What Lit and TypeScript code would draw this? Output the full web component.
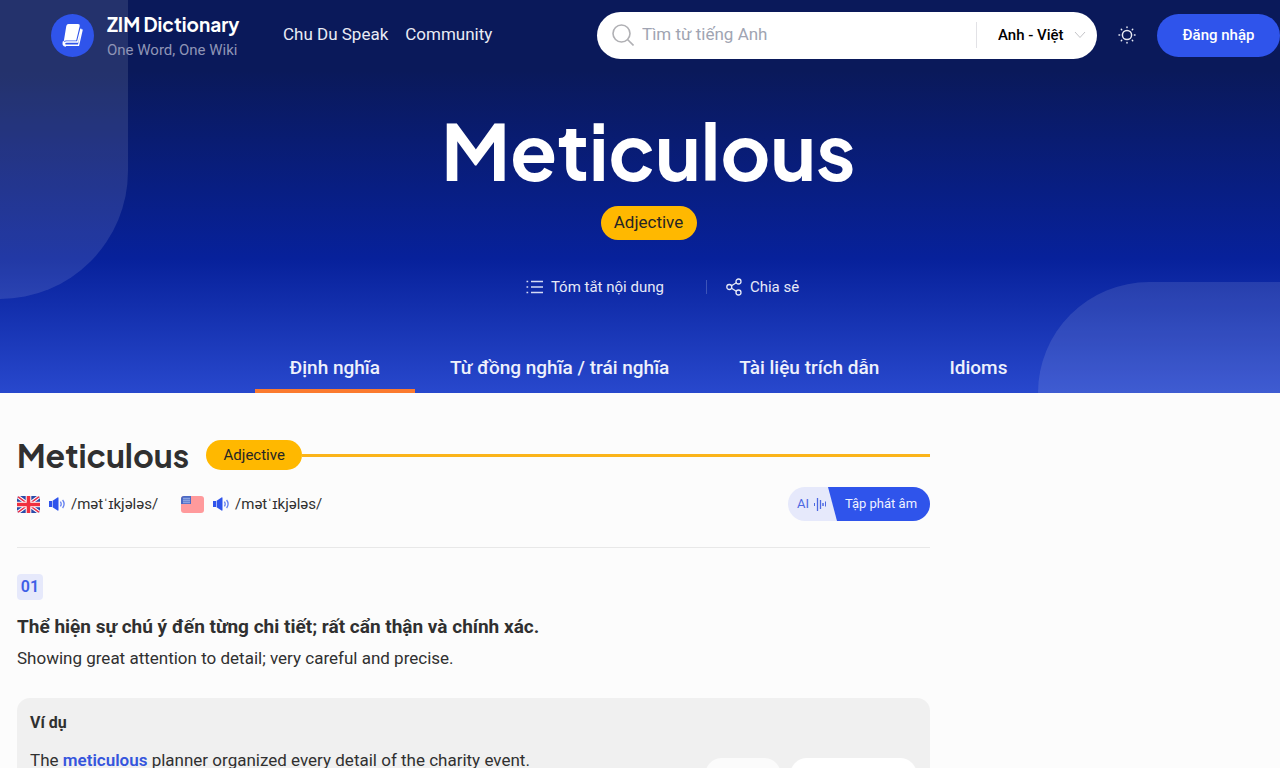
import { LitElement, html, css, svg } from "lit";
import { customElement, state } from "lit/decorators.js";

const speaker = svg`<svg class="speaker" viewBox="0 0 16 14" width="16" height="14" aria-hidden="true">
  <path d="M0 4h3v6H0z" fill="#2f54eb"/><path d="M3.6 3.8 8.5 .4Q9.5 0 9.5 1v12q0 1-1 .6L3.6 10.2z" fill="#2f54eb"/>
  <path d="M11.4 4.6q1.6 2.4 0 4.8M13.6 3q3 4 0 8" fill="none" stroke="#2f54eb" stroke-width="1.300" opacity=".75"/>
</svg>`;

const flagUk = svg`<svg viewBox="0 0 23 17" width="23" height="17" role="img" aria-label="UK">
  <clipPath id="uk"><rect width="23" height="17" rx="3"/></clipPath>
  <g clip-path="url(#uk)"><rect width="23" height="17" fill="#2b4aa8"/>
  <path d="M0 0 23 17M23 0 0 17" stroke="#fff" stroke-width="3.6"/><path d="M0 0 23 17M23 0 0 17" stroke="#e8304a" stroke-width="1.5"/>
  <path d="M11.5 0v17M0 8.5h23" stroke="#fff" stroke-width="5.6"/><path d="M11.5 0v17M0 8.5h23" stroke="#f0303f" stroke-width="3.6"/></g>
</svg>`;

const flagUs = svg`<svg viewBox="0 0 23 17" width="23" height="17" role="img" aria-label="US">
  <clipPath id="us"><rect width="23" height="17" rx="3"/></clipPath>
  <g clip-path="url(#us)"><rect width="23" height="17" fill="#ff9a9c"/><rect width="10" height="8" fill="#4a69c4"/>
  <path d="M2 2.500h7M2 4.500h7M2 6.500h7" stroke="#8ba2e0" stroke-width="1.400"/></g>
</svg>`;

@customElement("app-root")
export class AppRoot extends LitElement {
  @state() private active = 0;

  private tabs = ["Định nghĩa", "Từ đồng nghĩa / trái nghĩa", "Tài liệu trích dẫn", "Idioms"];

  static styles = css`
    :host { display: block; height: 100vh; overflow: hidden; background: #fcfcfc; color: #303030; font: 17px/22px Roboto, sans-serif; }
    * { box-sizing: border-box; }
    button, input, select { font: inherit; color: inherit; border: 0; background: none; padding: 0; margin: 0; }
    button, select { cursor: pointer; }
    a { color: inherit; text-decoration: none; }
    h1, h2, h3, p { margin: 0; }
    svg { display: block; flex: none; }
    .hero { position: relative; overflow: hidden; color: #fff; background: linear-gradient(#0a195a 0, #0a195a 18%, #07219b 66%, #2848cd 100%); }
    .shape { position: absolute; background: rgba(255, 255, 255, 0.11); }
    .shape-left { left: 0; top: 0; width: 10%; height: 299px; border-bottom-right-radius: 128px; }
    .shape-right { right: 0; bottom: 0; width: 242px; height: 111px; border-top-left-radius: 111px; }
    .bar { position: relative; display: flex; align-items: center; height: 70px; padding-left: 51px; }
    .brand { display: flex; align-items: center; gap: 13px; width: 232px; }
    .name { display: block; padding-top: 3px; font: 700 19px/26px "Plus Jakarta Sans", Inter, sans-serif; }
    .tag { display: block; font-size: 15px; line-height: 26px; color: #8f95b6; }
    .nav { display: flex; gap: 17px; flex: 1; padding-bottom: 2px; }
    .nav a { color: #e9ebf4; }
    .search { display: flex; align-items: center; width: 500px; height: 47px; border-radius: 24px; background: #fff; padding: 0 11px 0 15px; }
    .search input { flex: 1; min-width: 0; outline: 0; padding: 0 0 2px 8px; color: #222; }
    .search input::placeholder { color: #a0a4b2; opacity: 1; }
    .lang { position: relative; display: flex; align-items: center; border-left: 1px solid #e2e2e6; height: 26px; padding-left: 21px; }
    .lang select { appearance: none; width: 76px; color: #000; font-size: 15px; font-weight: 500; outline: 0; }
    .theme { display: grid; place-items: center; width: 60px; height: 42px; }
    .login { width: 123px; height: 43px; border-radius: 22px; background: #2f54eb; font-size: 15px; font-weight: 500; }
    .intro { position: relative; display: flex; flex-direction: column; align-items: center; padding: 30px 0 0 17px; }
    .title { font: 700 77px/100px "Plus Jakarta Sans", Inter, sans-serif; }
    .pill { display: flex; align-items: center; justify-content: center; background: #ffb800; color: #252525; border-radius: 17px; width: 96px; height: 34px; padding-bottom: 2px; }
    .intro .pill { margin-top: 6px; }
    .actions { display: flex; align-items: center; margin-top: 34px; padding-left: 28px; font-size: 15px; }
    .actions button { display: flex; align-items: center; gap: 8px; line-height: 26px; color: #e6e9f7; }
    .rule { width: 1px; height: 14px; background: #3d54b8; margin: 0 19px 0 42px; }
    .tabs { display: flex; margin-top: 43px; }
    .tabs button { height: 50px; padding: 4px 35px 0; font-size: 19px; font-weight: 500; color: #eef1fc; border-bottom: 4px solid transparent; }
    .tabs .on { border-color: #fb7a2e; }
    .content { width: 930px; max-width: 100%; padding: 41px 0 0 17px; }
    .head { display: flex; align-items: center; }
    .word { font: 700 32px/42px "Plus Jakarta Sans", Inter, sans-serif; margin-right: 17px; }
    .head .pill { height: 30px; font-size: 15px; padding-bottom: 0; }
    .line { flex: 1; height: 3px; background: #fbb41a; }
    .sounds { display: flex; align-items: center; margin-top: 11px; padding-bottom: 26px; border-bottom: 1px solid #e8e8e8; }
    .sound { display: flex; align-items: center; gap: 6px; margin-right: 23px; font-size: 15px; }
    .sound .speaker { margin-left: 3px; }
    .ai { position: relative; display: flex; margin-left: auto; width: 142px; height: 34px; border-radius: 17px; overflow: hidden; background: #e6e9fb; color: #4d68e2; font-size: 13px; line-height: 34px; }
    .ai-left { display: flex; align-items: center; gap: 4px; width: 40px; padding-left: 9px; }
    .ai-right { flex: 1; background: #2f54eb; color: #eef1ff; clip-path: polygon(0 0, 100% 0, 100% 100%, 9px 100%); padding-left: 4px; }
    .num { display: grid; place-items: center; width: 26px; height: 26px; margin-top: 26px; border-radius: 4px; background: #e6e9fb; color: #3f60e6; font-size: 16px; font-weight: 600; }
    .meaning { font-size: 19px; line-height: 28px; font-weight: 700; margin-top: 13px; }
    .gloss { margin-top: 6px; }
    .example { margin-top: 29px; padding: 13px; border-radius: 13px; background: #f0f0f0; }
    .example h3 { font-size: 16px; font-weight: 700; line-height: 24px; }
    .example b { color: #3555dd; font-weight: 600; }
    .row { display: flex; gap: 9px; align-items: flex-start; margin-top: 14px; }
    .row p { flex: 1; }
    .chip { width: 76px; height: 34px; margin-top: 9px; border-radius: 17px; background: #fbfbfb; }
    .chip-wide { width: 127px; background: #fff; }
  `;

  render() {
    return html`
      <header class="hero">
        <div class="shape shape-left"></div>
        <div class="shape shape-right"></div>
        <div class="bar">
          <a class="brand" href="#">
            <svg viewBox="0 0 43 43" width="43" height="43" aria-hidden="true">
              <circle cx="21.500" cy="21.500" r="21.500" fill="#2f54eb"/>
              <path d="M17.500 10h9.500q2.200 0 1.700 2l-3.500 14.500H15q-1.400 0-2.200.8L15.300 12q.4-2 2.200-2z" fill="#fff"/>
              <path d="M29.800 15.300 26.600 28H15.500q-2 0-2 1.700 0 1.600 2 1.600h12L31 16" fill="none" stroke="#fff" stroke-width="1.400" stroke-linejoin="round" stroke-linecap="round"/>
              <path d="M12.700 27.200q-1.700 4.500 2.300 4.800" fill="none" stroke="#fff" stroke-width="1.600"/>
            </svg>
            <span><span class="name">ZIM Dictionary</span><span class="tag">One Word, One Wiki</span></span>
          </a>
          <nav class="nav"><a href="#">Chu Du Speak</a><a href="#">Community</a></nav>
          <form class="search">
            <svg viewBox="0 0 22 22" width="22" height="22" fill="none" stroke="#b0b0b4" stroke-width="1.600" aria-hidden="true"><circle cx="9.500" cy="9.500" r="8.500"/><path d="m15.500 15.500 6 6"/></svg>
            <input type="text" aria-label="Tìm từ" placeholder="Tìm từ tiếng Anh" />
            <span class="lang">
              <select aria-label="Anh - Việt"><option>Anh - Việt</option></select>
              <svg viewBox="0 0 12 8" width="12" height="8" fill="none" stroke="#c4c4c8" aria-hidden="true"><path d="m1 1 5 5.500L11 1"/></svg>
            </span>
          </form>
          <button class="theme" aria-label="Theme">
            <svg viewBox="0 0 18 18" width="18" height="18" fill="none" stroke="#e9ebf4" stroke-width="1.500" stroke-linecap="round"><circle cx="9" cy="9" r="4.600"/><path d="M9 1v.6M9 16.400v.6M1 9h.6M16.400 9h.6M3.300 3.300l.4.4M14.300 14.300l.4.4M14.700 3.300l-.4.4M3.700 14.300l-.4.4"/></svg>
          </button>
          <button class="login">Đăng nhập</button>
        </div>
        <div class="intro">
          <h1 class="title">Meticulous</h1>
          <span class="pill">Adjective</span>
          <div class="actions">
            <button>
              <svg viewBox="0 0 17 14" width="17" height="14" stroke="#d5dbf5" stroke-width="1.300" aria-hidden="true"><path d="M5 1.500h12M5 7h12M5 12.500h12M.5 1.500h1.700M.5 7h1.700M.5 12.500h1.700"/></svg>
              Tóm tắt nội dung
            </button>
            <span class="rule"></span>
            <button>
              <svg viewBox="0 0 16 18" width="16" height="18" fill="none" stroke="#e6e9f7" stroke-width="1.300" aria-hidden="true"><circle cx="3.300" cy="9" r="2.500"/><circle cx="12.500" cy="3.500" r="2.500"/><circle cx="12.500" cy="14.500" r="2.500"/><path d="m5.500 7.700 4.800-2.900M5.500 10.300l4.800 2.900"/></svg>
              Chia sẻ
            </button>
          </div>
          <nav class="tabs">
            ${this.tabs.map((t, i) => html`<button class=${i === this.active ? "on" : ""} @click=${() => (this.active = i)}>${t}</button>`)}
          </nav>
        </div>
      </header>
      <main class="content">
        <div class="head"><h2 class="word">Meticulous</h2><span class="pill">Adjective</span><span class="line"></span></div>
        <div class="sounds">
          ${[flagUk, flagUs].map((f) => html`<button class="sound">${f}${speaker}<span>/mətˈɪkjələs/</span></button>`)}
          <button class="ai">
            <span class="ai-left">AI
              <svg viewBox="0 0 14 14" width="14" height="14" stroke="#4d68e2" aria-hidden="true"><path d="M1.500 6v3M12.500 4.500v5"/><path d="M4.500 1v13M7.500 3v9" stroke-width="1.300"/><path d="M10 6v3" stroke-width="1.500"/></svg>
            </span>
            <span class="ai-right">Tập phát âm</span>
          </button>
        </div>
        <div class="num">01</div>
        <h2 class="meaning">Thể hiện sự chú ý đến từng chi tiết; rất cẩn thận và chính xác.</h2>
        <p class="gloss">Showing great attention to detail; very careful and precise.</p>
        <section class="example">
          <h3>Ví dụ</h3>
          <div class="row">
            <p>The <b>meticulous</b> planner organized every detail of the charity event.</p>
            <span class="chip"></span><span class="chip chip-wide"></span>
          </div>
        </section>
      </main>
    `;
  }
}
